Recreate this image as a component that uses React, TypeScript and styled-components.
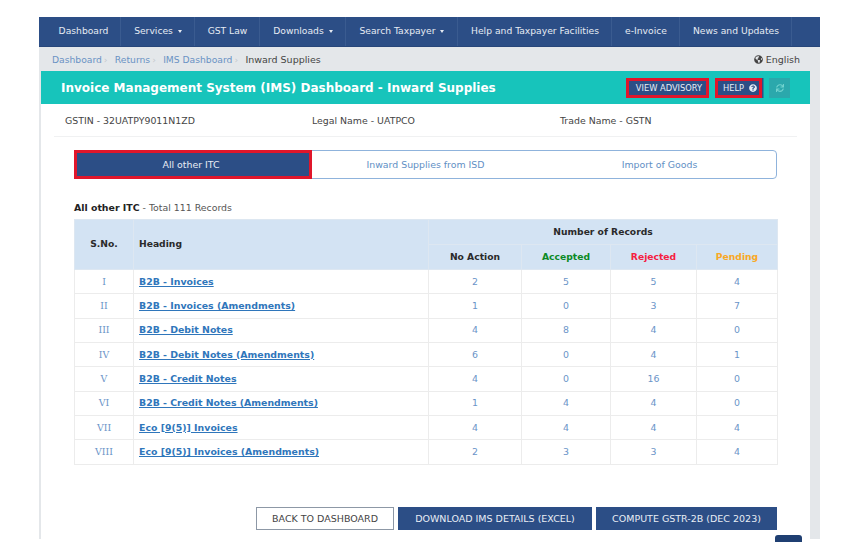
import React from "react";
import styled, { createGlobalStyle } from "styled-components";
import { FaGlobeAmericas, FaQuestionCircle, FaSync } from "react-icons/fa";

const Global = createGlobalStyle`
  html, body { margin: 0; padding: 0; background: #fff; }
  body { font-family: "DejaVu Sans", Verdana, sans-serif; font-size: 9.4px; color: #333; }
  * { box-sizing: border-box; }
`;

const Page = styled.div`
  position: relative;
  width: 853px;
  height: 542px;
  overflow: hidden;
  padding: 17px 33px 3px 39px;
`;
const Shell = styled.div`
  height: 522px;
  background: #e4e7ea;
  display: flex;
  flex-direction: column;
`;
const Nav = styled.nav`
  height: 30px;
  flex: none;
  background: #2c4e86;
  border-bottom: 1px solid #27467a;
  display: flex;
  color: #e6ebf3;
  font-size: 9.2px;
`;
const NavItem = styled.div<{ $w: number; $first?: boolean }>`
  width: ${(p) => p.$w}px;
  display: flex;
  align-items: center;
  justify-content: center;
  gap: 5px;
  border-right: 1px solid #3a5b90;
  white-space: nowrap;
  padding: 0 0 2px ${(p) => (p.$first ? 8 : 1)}px;
`;
const Caret = styled.span`
  width: 0;
  height: 0;
  border-left: 2.5px solid transparent;
  border-right: 2.5px solid transparent;
  border-top: 3px solid #e6ebf3;
  margin-top: 1px;
`;
const Crumbs = styled.div`
  height: 24px;
  flex: none;
  padding: 0 20px 0 13px;
  display: flex;
  align-items: center;
`;
const Crumb = styled.span`
  color: #6a92c4;
  font-size: 9.2px;
`;
const CrumbSep = styled.span`
  color: #c4c9ce;
  width: 13px;
  padding-left: 2px;
`;
const CrumbCurrent = styled.span`
  color: #444;
  font-size: 9.5px;
`;
const Lang = styled.span`
  margin-left: auto;
  display: flex;
  align-items: center;
  gap: 3px;
  color: #444;
  font-size: 9.5px;
`;
const Card = styled.main`
  flex: 1;
  margin: 0 10px 0 2px;
  background: #fff;
  display: flex;
  flex-direction: column;
`;
const TitleBar = styled.header`
  height: 33px;
  flex: none;
  background: #17c4bb;
  padding: 0 20px;
  display: flex;
  align-items: center;
`;
const Title = styled.h1`
  margin: 0;
  font-size: 12px;
  font-weight: 700;
  color: #fff;
  white-space: nowrap;
`;
const ActionGroup = styled.div`
  margin-left: auto;
  display: flex;
  align-items: center;
`;
const ActionButton = styled.button<{ $w: number; $gap: number; $tail?: boolean }>`
  width: ${(p) => p.$w}px;
  height: 20px;
  margin-right: ${(p) => p.$gap}px;
  background: #2c4e86;
  border: 3px solid #e0162b;
  color: #e8edf5;
  font: 8.3px "DejaVu Sans", sans-serif;
  padding: 0 0 0 3px;
  display: flex;
  align-items: center;
  justify-content: center;
  gap: 5px;
  ${(p) => (p.$tail ? "box-shadow: 1.5px 0 0 #2c4e86;" : "")}
`;
const RefreshButton = styled.div`
  width: 21px;
  height: 20px;
  background: #2ba8ac;
  color: #72d3cf;
  display: flex;
  align-items: center;
  justify-content: center;
`;
const InfoRow = styled.div`
  height: 33px;
  flex: none;
  margin: 0 13px;
  padding: 0 11px;
  border-bottom: 1px solid #f0f1f2;
  display: grid;
  grid-template-columns: 247px 248px 1fr;
  align-items: center;
  color: #444;
`;
const Body = styled.div`
  flex: 1;
  padding: 13px 33px 0 33px;
  display: flex;
  flex-direction: column;
`;
const Tabs = styled.div`
  height: 29px;
  flex: none;
  border: 1px solid #8fb3dc;
  border-radius: 4px;
  display: grid;
  grid-template-columns: 237px 227px 1fr;
  color: #5f8fc5;
`;
const Tab = styled.div<{ $active?: boolean; $nudge?: number }>`
  display: flex;
  align-items: center;
  justify-content: center;
  padding-left: ${(p) => p.$nudge ?? 0}px;
  ${(p) =>
    p.$active
      ? `background:#2c4e86;color:#e8edf5;border:3px solid #e0162b;margin:-1px 0 -1px -1px;padding-right:4px;`
      : ""}
`;
const Summary = styled.p`
  margin: 23px 0 6px;
  height: 11px;
  line-height: 11px;
  color: #555;
  b { color: #222; }
`;
const Table = styled.table`
  width: 703px;
  border-collapse: collapse;
  table-layout: fixed;
  font-size: 9.4px;
  th {
    background: #d3e3f3;
    border: 1px solid #dde7f1;
    color: #2a2a2a;
    font-weight: 700;
    font-size: 9.2px;
    height: 25px;
    padding: 0 0 2px;
  }
  td {
    height: 24.35px;
    padding: 0 0 1px;
    border: 1px solid #ececec;
    text-align: center;
    color: #6a94c8;
  }
`;
const HeadingTh = styled.th`
  text-align: left;
  padding-left: 5px !important;
`;
const StatusTh = styled.th<{ $c: string }>`
  color: ${(p) => p.$c} !important;
`;
const Numeral = styled.td`
  font-family: "DejaVu Serif", serif;
`;
const HeadingTd = styled.td`
  text-align: left !important;
  padding-left: 5px !important;
`;
const RowLink = styled.a`
  color: #2f76bb;
  font-weight: 700;
  text-decoration: underline;
`;
const Footer = styled.div`
  margin-top: 42px;
  display: flex;
  justify-content: flex-end;
  gap: 4px;
`;
const FootButton = styled.button<{ $w: number; $light?: boolean }>`
  width: ${(p) => p.$w}px;
  height: 23px;
  padding: 0;
  font: 9.5px "DejaVu Sans", sans-serif;
  background: ${(p) => (p.$light ? "#fff" : "#2c4e86")};
  color: ${(p) => (p.$light ? "#444" : "#e8edf5")};
  border: 1px solid ${(p) => (p.$light ? "#8d98a6" : "#2c4e86")};
`;
const ScrollTop = styled.div`
  position: absolute;
  left: 775px;
  top: 535px;
  width: 27px;
  height: 12px;
  background: #1f3f72;
  border-radius: 3px 3px 0 0;
`;

const navItems: [string, number, boolean][] = [
  ["Dashboard", 82, false],
  ["Services", 74, true],
  ["GST Law", 65, false],
  ["Downloads", 86, true],
  ["Search Taxpayer", 112, true],
  ["Help and Taxpayer Facilities", 154, false],
  ["e-Invoice", 68, false],
  ["News and Updates", 112, false],
];

const rows: [string, string, number, number, number, number][] = [
  ["I", "B2B - Invoices", 2, 5, 5, 4],
  ["II", "B2B - Invoices (Amendments)", 1, 0, 3, 7],
  ["III", "B2B - Debit Notes", 4, 8, 4, 0],
  ["IV", "B2B - Debit Notes (Amendments)", 6, 0, 4, 1],
  ["V", "B2B - Credit Notes", 4, 0, 16, 0],
  ["VI", "B2B - Credit Notes (Amendments)", 1, 4, 4, 0],
  ["VII", "Eco [9(5)] Invoices", 4, 4, 4, 4],
  ["VIII", "Eco [9(5)] Invoices (Amendments)", 2, 3, 3, 4],
];

export default function App() {
  return (
    <Page>
      <Global />
      <Shell>
        <Nav>
          {navItems.map(([label, w, caret], i) => (
            <NavItem key={label} $w={w} $first={i === 0}>
              {label}
              {caret && <Caret />}
            </NavItem>
          ))}
        </Nav>
        <Crumbs>
          <Crumb>Dashboard</Crumb>
          <CrumbSep>›</CrumbSep>
          <Crumb>Returns</Crumb>
          <CrumbSep>›</CrumbSep>
          <Crumb>IMS Dashboard</Crumb>
          <CrumbSep>›</CrumbSep>
          <CrumbCurrent>Inward Supplies</CrumbCurrent>
          <Lang>
            <FaGlobeAmericas size={9} />
            English
          </Lang>
        </Crumbs>
        <Card>
          <TitleBar>
            <Title>Invoice Management System (IMS) Dashboard - Inward Supplies</Title>
            <ActionGroup>
              <ActionButton $w={83} $gap={6}>VIEW ADVISORY</ActionButton>
              <ActionButton $w={47} $gap={7} $tail>
                HELP <FaQuestionCircle size={8} />
              </ActionButton>
              <RefreshButton>
                <FaSync size={8} />
              </RefreshButton>
            </ActionGroup>
          </TitleBar>
          <InfoRow>
            <span>GSTIN - 32UATPY9011N1ZD</span>
            <span>Legal Name - UATPCO</span>
            <span>Trade Name - GSTN</span>
          </InfoRow>
          <Body>
            <Tabs>
              <Tab $active>All other ITC</Tab>
              <Tab>Inward Supplies from ISD</Tab>
              <Tab $nudge={4}>Import of Goods</Tab>
            </Tabs>
            <Summary>
              <b>All other ITC</b> - Total 111 Records
            </Summary>
            <Table>
              <colgroup>
                <col width="59" />
                <col width="295" />
                <col width="93" />
                <col width="89" />
                <col width="86" />
                <col width="81" />
              </colgroup>
              <thead>
                <tr>
                  <th rowSpan={2}>S.No.</th>
                  <HeadingTh rowSpan={2}>Heading</HeadingTh>
                  <th colSpan={4}>Number of Records</th>
                </tr>
                <tr>
                  <th>No Action</th>
                  <StatusTh $c="#0b8a24">Accepted</StatusTh>
                  <StatusTh $c="#f5203f">Rejected</StatusTh>
                  <StatusTh $c="#f9a825">Pending</StatusTh>
                </tr>
              </thead>
              <tbody>
                {rows.map(([n, h, a, b, c, d]) => (
                  <tr key={n}>
                    <Numeral>{n}</Numeral>
                    <HeadingTd>
                      <RowLink href="#">{h}</RowLink>
                    </HeadingTd>
                    <td>{a}</td>
                    <td>{b}</td>
                    <td>{c}</td>
                    <td>{d}</td>
                  </tr>
                ))}
              </tbody>
            </Table>
            <Footer>
              <FootButton $w={138} $light>BACK TO DASHBOARD</FootButton>
              <FootButton $w={194}>DOWNLOAD IMS DETAILS (EXCEL)</FootButton>
              <FootButton $w={181}>COMPUTE GSTR-2B (DEC 2023)</FootButton>
            </Footer>
          </Body>
        </Card>
      </Shell>
      <ScrollTop />
    </Page>
  );
}
